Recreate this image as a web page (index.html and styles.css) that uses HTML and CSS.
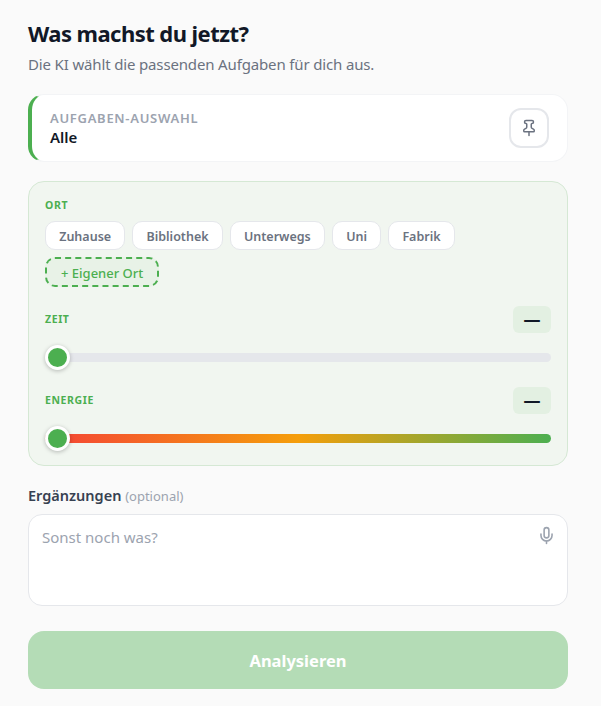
FILE: index.html
```html
<!DOCTYPE html>
<html lang="de">
<head>
<meta charset="utf-8">
<title>Was machst du jetzt?</title>
<link rel="stylesheet" href="styles.css">
</head>
<body>
<main class="page">
  <h1 class="title">Was machst du jetzt?</h1>
  <p class="subtitle">Die KI wählt die passenden Aufgaben für dich aus.</p>

  <section class="selector">
    <div class="selector-text">
      <div class="selector-label">AUFGABEN-AUSWAHL</div>
      <div class="selector-value">Alle</div>
    </div>
    <button class="pin" type="button" aria-label="Anheften">
      <svg width="18" height="18" viewBox="0 0 24 24" fill="none" stroke="#6b7280" stroke-width="2" stroke-linecap="round" stroke-linejoin="round"><path d="M12 17v5"/><path d="M9 10.76a2 2 0 0 1-1.11 1.79l-1.78.9A2 2 0 0 0 5 15.24V16a1 1 0 0 0 1 1h12a1 1 0 0 0 1-1v-.76a2 2 0 0 0-1.11-1.79l-1.78-.9A2 2 0 0 1 15 10.76V7a1 1 0 0 1 1-1 2 2 0 0 0 0-4H8a2 2 0 0 0 0 4 1 1 0 0 1 1 1z"/></svg>
    </button>
  </section>

  <section class="panel">
    <div class="panel-label">ORT</div>
    <div class="chips">
      <span class="chip">Zuhause</span>
      <span class="chip">Bibliothek</span>
      <span class="chip">Unterwegs</span>
      <span class="chip">Uni</span>
      <span class="chip">Fabrik</span>
      <span class="chip chip-add">+ Eigener Ort</span>
    </div>

    <div class="slider-head slider-head-time">
      <div class="panel-label">ZEIT</div>
      <div class="value-badge">—</div>
    </div>
    <div class="track track-plain"><span class="thumb"></span></div>

    <div class="slider-head slider-head-energy">
      <div class="panel-label">ENERGIE</div>
      <div class="value-badge">—</div>
    </div>
    <div class="track track-energy"><span class="thumb"></span></div>
  </section>

  <div class="notes-label"><strong>Ergänzungen</strong> <span class="optional">(optional)</span></div>
  <div class="notes">
    <span class="placeholder">Sonst noch was?</span>
    <svg class="mic" width="19" height="19" viewBox="0 0 24 24" fill="none" stroke="#9ca3af" stroke-width="2" stroke-linecap="round" stroke-linejoin="round"><path d="M12 2a3 3 0 0 0-3 3v7a3 3 0 0 0 6 0V5a3 3 0 0 0-3-3z"/><path d="M19 10v2a7 7 0 0 1-14 0v-2"/><path d="M12 19v3"/></svg>
  </div>

  <button class="submit" type="button">Analysieren</button>
</main>
</body>
</html>
```
FILE: styles.css
```css
* { box-sizing: border-box; }
html, body { margin: 0; padding: 0; }
body {
  background: #fafafa;
  font-family: "Noto Sans", "Open Sans", sans-serif;
  color: #111827;
  height: 706px;
  overflow: hidden;
}
.page {
  display: flex;
  flex-direction: column;
  padding: 18px 33px 0 28px;
}
.title {
  margin: 0;
  font-size: 22px;
  line-height: 30px;
  font-weight: 700;
  letter-spacing: -.55px;
  color: #111827;
}
.subtitle {
  margin: 5px 0 0;
  font-size: 15px;
  line-height: 23px;
  letter-spacing: -.15px;
  color: #6b7280;
}
.selector {
  margin-top: 18px;
  height: 68px;
  display: flex;
  align-items: center;
  justify-content: space-between;
  padding: 0 18px 0 18px;
  background: #fff;
  border: 1px solid #f3f4f6;
  border-left: 4px solid #4caf50;
  border-radius: 16px;
}
.selector-label {
  font-size: 13px;
  line-height: 18px;
  font-weight: 600;
  letter-spacing: .7px;
  color: #9ca3af;
}
.selector-value {
  font-size: 15px;
  line-height: 20px;
  font-weight: 600;
  color: #111827;
}
.pin {
  width: 40px;
  height: 40px;
  padding: 0;
  display: flex;
  align-items: center;
  justify-content: center;
  background: #fff;
  border: 2px solid #e5e7eb;
  border-radius: 12px;
}
.panel {
  margin-top: 19px;
  height: 285px;
  padding: 15px 16px 0;
  background: #f1f6f0;
  border: 1px solid #d5e8d4;
  border-radius: 16px;
}
.panel-label {
  font-size: 10.5px;
  line-height: 16px;
  font-weight: 700;
  letter-spacing: .6px;
  color: #4caf50;
}
.chips {
  display: flex;
  flex-wrap: wrap;
  gap: 7px;
  margin-top: 8px;
}
.chip {
  height: 29px;
  padding: 1px 13.2px 0;
  display: flex;
  align-items: center;
  font-size: 12.5px;
  font-weight: 600;
  color: #6b7280;
  background: #fff;
  border: 1px solid #e5e7eb;
  border-radius: 10px;
}
.chip-add {
  height: 30px;
  padding: 1px 14px 0;
  font-size: 13px;
  font-weight: 500;
  color: #4caf50;
  background: #e8f2e7;
  border: 2px dashed #4caf50;
}
.slider-head {
  display: flex;
  align-items: center;
  justify-content: space-between;
}
.slider-head .panel-label { margin-bottom: 2px; }
.slider-head-time { margin-top: 19px; }
.slider-head-energy { margin-top: 25px; }
.value-badge {
  width: 38px;
  height: 27px;
  display: flex;
  align-items: center;
  justify-content: center;
  background: #e3f0e2;
  border-radius: 6px;
  font-size: 17px;
  font-weight: 700;
  color: #111827;
}
.track {
  position: relative;
  height: 9px;
  margin-top: 20px;
  border-radius: 5px;
}
.track-plain { background: #e5e7eb; }
.track-energy {
  background: linear-gradient(90deg, #f44336, #f59e0b 50%, #4caf50);
}
.thumb {
  position: absolute;
  left: 0;
  top: -8px;
  width: 25px;
  height: 25px;
  background: #4caf50;
  border: 3px solid #fff;
  border-radius: 50%;
  box-shadow: 0 1px 4px rgba(0, 0, 0, .25);
}
.notes-label {
  margin-top: 19px;
  font-size: 14.5px;
  line-height: 20px;
  color: #374151;
}
.notes-label strong { font-weight: 600; }
.optional {
  font-size: 13px;
  color: #9ca3af;
}
.notes {
  position: relative;
  margin-top: 8px;
  height: 92px;
  padding: 11px 13px;
  background: #fff;
  border: 1px solid #e5e7eb;
  border-radius: 14px;
}
.placeholder {
  font-size: 15px;
  line-height: 22px;
  color: #9ca3af;
}
.mic {
  position: absolute;
  top: 11px;
  right: 11px;
}
.submit {
  margin-top: 25px;
  height: 58px;
  border: 0;
  border-radius: 16px;
  background: #b4dcb6;
  color: #fff;
  font-family: inherit;
  font-size: 16.5px;
  font-weight: 700;
}
```
